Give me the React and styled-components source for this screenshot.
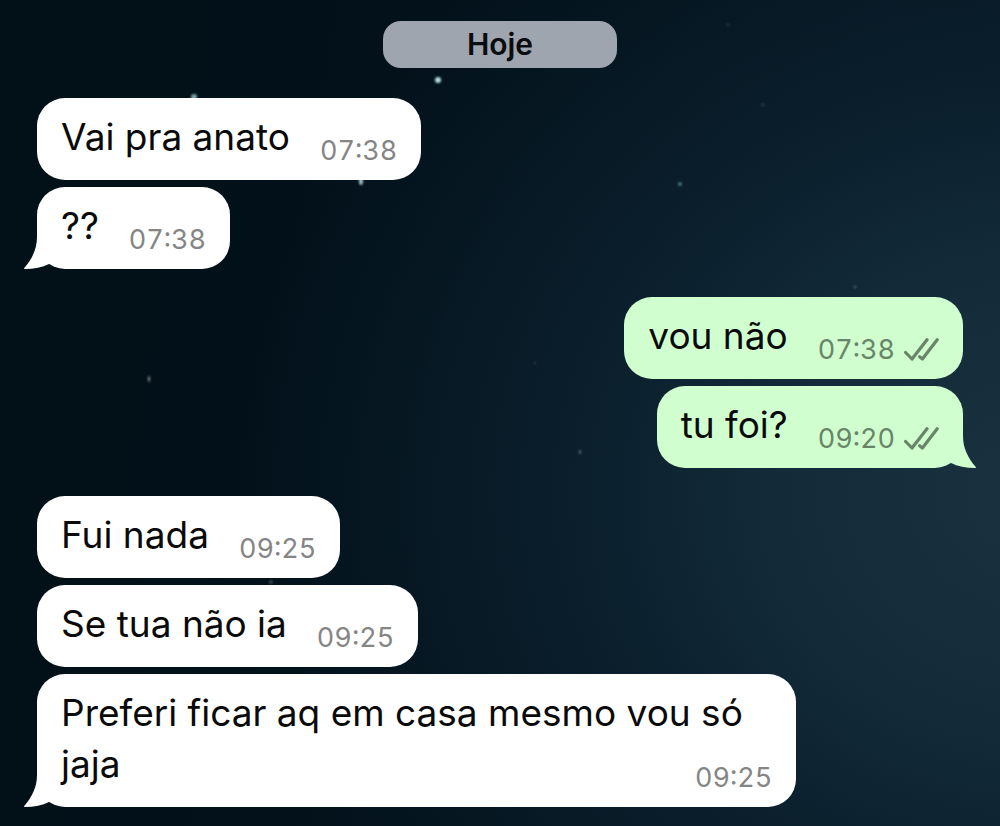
import React from 'react'
import styled, { createGlobalStyle } from 'styled-components'

const GlobalStyle = createGlobalStyle`
  * {
    box-sizing: border-box;
  }

  body {
    margin: 0;
    background: #03101a;
    font-family: Inter, 'Liberation Sans', sans-serif;
  }
`

const Chat = styled.main`
  position: relative;
  display: flex;
  flex-direction: column;
  gap: 28px;
  min-height: 100vh;
  padding: 21px 37px 18px;
  overflow: hidden;

  background:
    radial-gradient(ellipse 80% 85% at 104% 60%, #193240 0%, #142c3a 30%, #0a1e2b 60%, rgba(4, 18, 28, 0) 100%),
    linear-gradient(100deg, #021017 0%, #03121c 55%, #041622 100%);
`

const Sky = styled.svg`
  position: absolute;
  top: 0;
  left: 0;
  width: 100%;
  height: 100%;
`

const DayLabel = styled.h2`
  position: relative;
  align-self: center;
  min-width: 234px;
  margin: 0 0 2px;
  border-radius: 18px;

  background: #9ea5ae; /* cool gray */
  color: #0a0d10;
  font-size: 30px;
  font-weight: 600;
  line-height: 47px;
  text-align: center;
`

const Group = styled.ul`
  display: flex;
  flex-direction: column;
  align-items: ${(props) => (props.$sent ? 'flex-end' : 'flex-start')};
  gap: 7px;
  margin: 0;
  padding: 0;
  list-style: none;
`

const Bubble = styled.li`
  position: relative;
  isolation: isolate;
  display: flow-root;
  max-width: 82%;
  padding: 13px 24px 14px;
  border-radius: 28px;

  background: ${(props) => (props.$sent ? '#d0fecf' : '#ffffff')};
  color: #0a0a0a;
  font-size: 37px;
  line-height: 51px;
`

const Meta = styled.span`
  float: right;
  display: flex;
  align-items: center;
  gap: 8px;
  margin: 25px 0 0 30px;

  color: ${(props) => (props.$sent ? '#688568' : '#858585')};
  font-size: 27px;
  font-variant-numeric: tabular-nums;
  line-height: 30px;
`

/* sits above the bubble's background but below its text */
const TailShape = styled.svg`
  position: absolute;
  z-index: -1;
  bottom: 0;
  left: ${(props) => (props.$sent ? 'auto' : '-13px')};
  right: ${(props) => (props.$sent ? '-13px' : 'auto')};
  transform: ${(props) => (props.$sent ? 'scaleX(-1)' : 'none')};
  fill: ${(props) => (props.$sent ? '#d0fecf' : '#ffffff')};
`

const stars = [
  { x: 438, y: 80, rx: 3, ry: 3, color: '#b9dbe2' },
  { x: 194, y: 97, rx: 3, ry: 3, color: '#7fa3ad' },
  { x: 361, y: 181, rx: 2, ry: 4, color: '#a3c3c9' },
  { x: 680, y: 184, rx: 2, ry: 2, color: '#4f7880' },
  { x: 855, y: 287, rx: 1, ry: 1, color: '#7f8a93' },
  { x: 149, y: 379, rx: 1, ry: 3, color: '#8e989c' },
  { x: 580, y: 452, rx: 1, ry: 2, color: '#68787f' },
  { x: 763, y: 105, rx: 2, ry: 2, color: '#1f3642' },
  { x: 728, y: 25, rx: 2, ry: 2, color: '#1b2d35' },
  { x: 535, y: 363, rx: 1, ry: 2, color: '#263943' },
  { x: 271, y: 582, rx: 2, ry: 2, color: '#354850' },
]

const messages = [
  {
    id: 1,
    sent: false,
    items: [
      { text: 'Vai pra anato', time: '07:38' },
      { text: '??', time: '07:38' },
    ],
  },
  {
    id: 2,
    sent: true,
    items: [
      { text: 'vou não', time: '07:38' },
      { text: 'tu foi?', time: '09:20' },
    ],
  },
  {
    id: 3,
    sent: false,
    items: [
      { text: 'Fui nada', time: '09:25' },
      { text: 'Se tua não ia', time: '09:25' },
      { text: 'Preferi ficar aq em casa mesmo vou só jaja', time: '09:25' },
    ],
  },
]

const Stars = () => (
  <Sky viewBox="0 0 1000 826" preserveAspectRatio="xMidYMin slice" aria-hidden="true">
    <defs>
      <filter id="glow" x="-100%" y="-100%" width="300%" height="300%">
        <feGaussianBlur stdDeviation="1" />
      </filter>
    </defs>
    {stars.map((star) => (
      <ellipse
        key={`${star.x}-${star.y}`}
        cx={star.x}
        cy={star.y}
        rx={star.rx}
        ry={star.ry}
        fill={star.color}
        filter="url(#glow)"
      />
    ))}
  </Sky>
)

const Tail = ({ sent }) => (
  <TailShape $sent={sent} width="40" height="32" viewBox="0 0 40 32" aria-hidden="true">
    <path d="M13 0C13 12 8 22 0.4 30.8C-0.2 31.5 0.2 32 1 32C10 32 18.5 30.4 25 27L40 16V0Z" />
  </TailShape>
)

const ReadTicks = () => (
  <svg
    width="36"
    height="24"
    viewBox="0 0 36 24"
    fill="none"
    stroke="currentColor"
    strokeWidth="3.2"
    strokeLinecap="round"
    strokeLinejoin="round"
    role="img"
    aria-label="Lida"
  >
    <path d="M2.6 14.5L9 21L24 1.8" />
    <path d="M16.6 18.8L19.4 21L34.2 1.8" />
  </svg>
)

const Message = ({ text, time, sent, last }) => (
  <Bubble $sent={sent}>
    {last && <Tail sent={sent} />}
    {text}
    <Meta $sent={sent}>
      <time>{time}</time>
      {sent && <ReadTicks />}
    </Meta>
  </Bubble>
)

const App = () => {
  return (
    <>
      <GlobalStyle />
      <Chat>
        <Stars />
        <DayLabel>Hoje</DayLabel>
        {messages.map((group) => (
          <Group key={group.id} $sent={group.sent}>
            {group.items.map((item, index) => (
              <Message
                key={item.text}
                text={item.text}
                time={item.time}
                sent={group.sent}
                last={index === group.items.length - 1}
              />
            ))}
          </Group>
        ))}
      </Chat>
    </>
  )
}

export default App
